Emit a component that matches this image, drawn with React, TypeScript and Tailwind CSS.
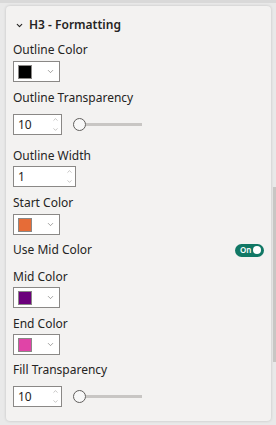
import { ChevronDown, ChevronUp } from 'lucide-react';

const font = { fontFamily: '"Segoe UI", "Noto Sans", sans-serif' };

// label line used above every control
const Label = ({ text, className = '' }: { text: string; className?: string }) => (
  <div className={`h-4 text-[12px] leading-4 text-[#252423] ${className}`}>{text}</div>
);

const ColorPicker = ({ color, className = '' }: { color: string; className?: string }) => (
  <div className={`flex h-[21px] w-[47px] items-center border border-[#8a8886] bg-white pl-[4px] ${className}`}>
    <div className="h-[14px] w-[14px] border border-[#8a8886]" style={{ backgroundColor: color }} />
    <ChevronDown className="ml-[14px] h-[9px] w-[9px] text-[#605e5c]" strokeWidth={1.5} />
  </div>
);

const NumberInput = ({ value, width }: { value: string; width: string }) => (
  <div className={`flex h-[21px] ${width} items-center justify-between border border-[#8a8886] bg-white pl-[4px] pr-[2px]`}>
    <span className="text-[12px] leading-4 text-[#252423]">{value}</span>
    <div className="flex flex-col items-center">
      <ChevronUp className="h-[7px] w-[7px] text-[#a19f9d]" strokeWidth={2} />
      <ChevronDown className="mt-[3px] h-[7px] w-[7px] text-[#a19f9d]" strokeWidth={2} />
    </div>
  </div>
);

const Slider = () => (
  <div className="ml-[11px] flex items-center">
    <div className="h-[13px] w-[13px] rounded-full border border-[#605e5c] bg-[#f8f8f8]" />
    <div className="h-[3px] w-[56px] bg-[#c8c6c4]" />
  </div>
);

export default function App() {
  return (
    <div className="relative h-[425px] w-[276px] overflow-hidden bg-[#e9e9e9]" style={font}>
      <div className="h-[3px] w-full bg-[#d9d9d9]" />
      {/* card */}
      <div className="ml-[6px] mt-[3px] h-[415px] w-[265px] rounded-[4px] bg-[#f3f2f1] pl-[7px] pt-[11px] shadow-[0_0_3px_rgba(0,0,0,0.18)]">
        <div className="flex h-4 items-center">
          <ChevronDown className="ml-[2px] h-[9px] w-[9px] text-[#252423]" strokeWidth={3} />
          <span className="ml-[5px] text-[12px] font-semibold leading-4 text-[#252423]">H3 - Formatting</span>
        </div>

        <Label text="Outline Color" className="mt-[9px]" />
        <ColorPicker color="#000000" className="mt-[3px]" />

        <Label text="Outline Transparency" className="mt-[8px]" />
        <div className="mt-[8px] flex items-center">
          <NumberInput value="10" width="w-[49px]" />
          <Slider />
        </div>

        <Label text="Outline Width" className="mt-[13px]" />
        <div className="mt-[2px]">
          <NumberInput value="1" width="w-[63px]" />
        </div>

        <Label text="Start Color" className="mt-[8px]" />
        <ColorPicker color="#e66c37" className="mt-[3px]" />

        <div className="mt-[7px] flex h-4 items-center justify-between pr-[7px]">
          <span className="text-[12px] leading-4 text-[#252423]">Use Mid Color</span>
          <div className="flex h-[13px] w-[29px] items-center justify-between rounded-full bg-[#117865] pl-[5px] pr-[3px]">
            <span className="text-[8px] font-semibold leading-none text-white">On</span>
            <div className="h-[8px] w-[8px] rounded-full bg-white" />
          </div>
        </div>

        <Label text="Mid Color" className="mt-[11px]" />
        <ColorPicker color="#6b007b" className="mt-[2px]" />

        <Label text="End Color" className="mt-[8px]" />
        <ColorPicker color="#e044a7" className="mt-[2px]" />

        <Label text="Fill Transparency" className="mt-[7px]" />
        <div className="mt-[8px] flex items-center">
          <NumberInput value="10" width="w-[49px]" />
          <Slider />
        </div>
      </div>
      {/* scrollbar thumb */}
      <div className="absolute right-0 top-[187px] h-[175px] w-[3px] bg-[#c8c6c4]" />
    </div>
  );
}
